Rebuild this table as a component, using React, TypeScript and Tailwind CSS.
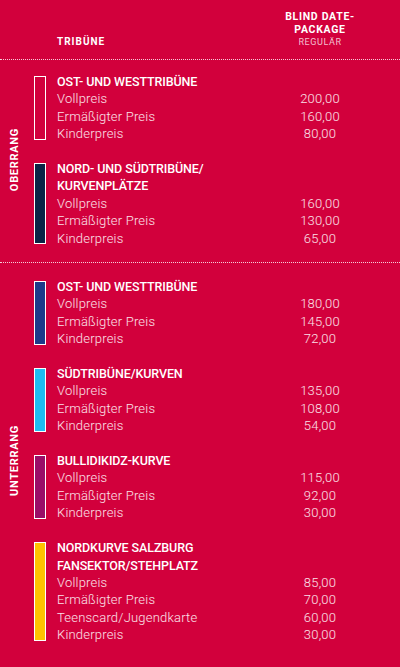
const font = { fontFamily: 'Roboto, "Liberation Sans", sans-serif' }

type Group = {
  title: string[]
  bar: string
  rows: [string, string][]
}

const oberrang: Group[] = [
  {
    title: ['OST- UND WESTTRIBÜNE'],
    bar: 'bg-transparent',
    rows: [
      ['Vollpreis', '200,00'],
      ['Ermäßigter Preis', '160,00'],
      ['Kinderpreis', '80,00'],
    ],
  },
  {
    title: ['NORD- UND SÜDTRIBÜNE/', 'KURVENPLÄTZE'],
    bar: 'bg-[#0b2346]',
    rows: [
      ['Vollpreis', '160,00'],
      ['Ermäßigter Preis', '130,00'],
      ['Kinderpreis', '65,00'],
    ],
  },
]

const unterrang: Group[] = [
  {
    title: ['OST- UND WESTTRIBÜNE'],
    bar: 'bg-[#1d3a8a]',
    rows: [
      ['Vollpreis', '180,00'],
      ['Ermäßigter Preis', '145,00'],
      ['Kinderpreis', '72,00'],
    ],
  },
  {
    title: ['SÜDTRIBÜNE/KURVEN'],
    bar: 'bg-[#1fbdf0]',
    rows: [
      ['Vollpreis', '135,00'],
      ['Ermäßigter Preis', '108,00'],
      ['Kinderpreis', '54,00'],
    ],
  },
  {
    title: ['BULLIDIKIDZ-KURVE'],
    bar: 'bg-[#9a0d67]',
    rows: [
      ['Vollpreis', '115,00'],
      ['Ermäßigter Preis', '92,00'],
      ['Kinderpreis', '30,00'],
    ],
  },
  {
    title: ['NORDKURVE SALZBURG', 'FANSEKTOR/STEHPLATZ'],
    bar: 'bg-[#ffc200]',
    rows: [
      ['Vollpreis', '85,00'],
      ['Ermäßigter Preis', '70,00'],
      ['Teenscard/Jugendkarte', '60,00'],
      ['Kinderpreis', '30,00'],
    ],
  },
]

function PriceGroup({ group }: { group: Group }) {
  return (
    <div className="flex gap-[11px]">
      <div className={`w-3 shrink-0 my-[3px] border-[1.5px] border-white ${group.bar}`} />
      <div className="flex-1 leading-[17.4px]">
        {group.title.map((t) => (
          <div key={t} className="text-[12.5px] font-medium tracking-[-0.1px] text-white">
            {t}
          </div>
        ))}
        {group.rows.map(([label, price]) => (
          <div key={label} className="flex text-[13px] font-light tracking-[0.2px] text-white/90">
            <span className="flex-1">{label}</span>
            <span className="w-[80px] text-center">{price}</span>
          </div>
        ))}
      </div>
    </div>
  )
}

function Section({ label, groups, className }: { label: string; groups: Group[]; className: string }) {
  return (
    <div className={`flex ${className}`}>
      <div className="w-[30px] flex items-center justify-center">
        <span className="[writing-mode:vertical-rl] rotate-180 text-[11px] font-bold tracking-[0.7px] text-white">
          {label}
        </span>
      </div>
      <div className="flex-1 pl-[4px] pr-[40px] flex flex-col gap-[17.4px]">
        {groups.map((g, i) => (
          <PriceGroup key={i} group={g} />
        ))}
      </div>
    </div>
  )
}

export default function App() {
  return (
    <div className="min-h-screen w-[400px] bg-[#d2003c] text-white overflow-hidden" style={font}>
      <div className="h-[59px] flex items-end pl-[57px] pr-[40px]">
        <div className="flex-1 pb-[12px] text-[10px] leading-[11px] font-bold tracking-[1px]">TRIBÜNE</div>
        <div className="w-[80px] pb-[11px] text-center">
          <div className="text-[10.5px] leading-[12.5px] font-bold tracking-[0.7px]">BLIND DATE-</div>
          <div className="text-[10.5px] leading-[12.5px] font-bold tracking-[0.7px]">PACKAGE</div>
          <div className="text-[9px] leading-[12px] tracking-[0.6px] text-white/75">REGULÄR</div>
        </div>
      </div>
      <div className="border-t border-dotted border-white/80" />
      <Section label="OBERRANG" groups={oberrang} className="pt-[13px] pb-[15px]" />
      <div className="border-t border-dotted border-white/80" />
      <Section label="UNTERRANG" groups={unterrang} className="pt-[15px] pb-[29px]" />
    </div>
  )
}
